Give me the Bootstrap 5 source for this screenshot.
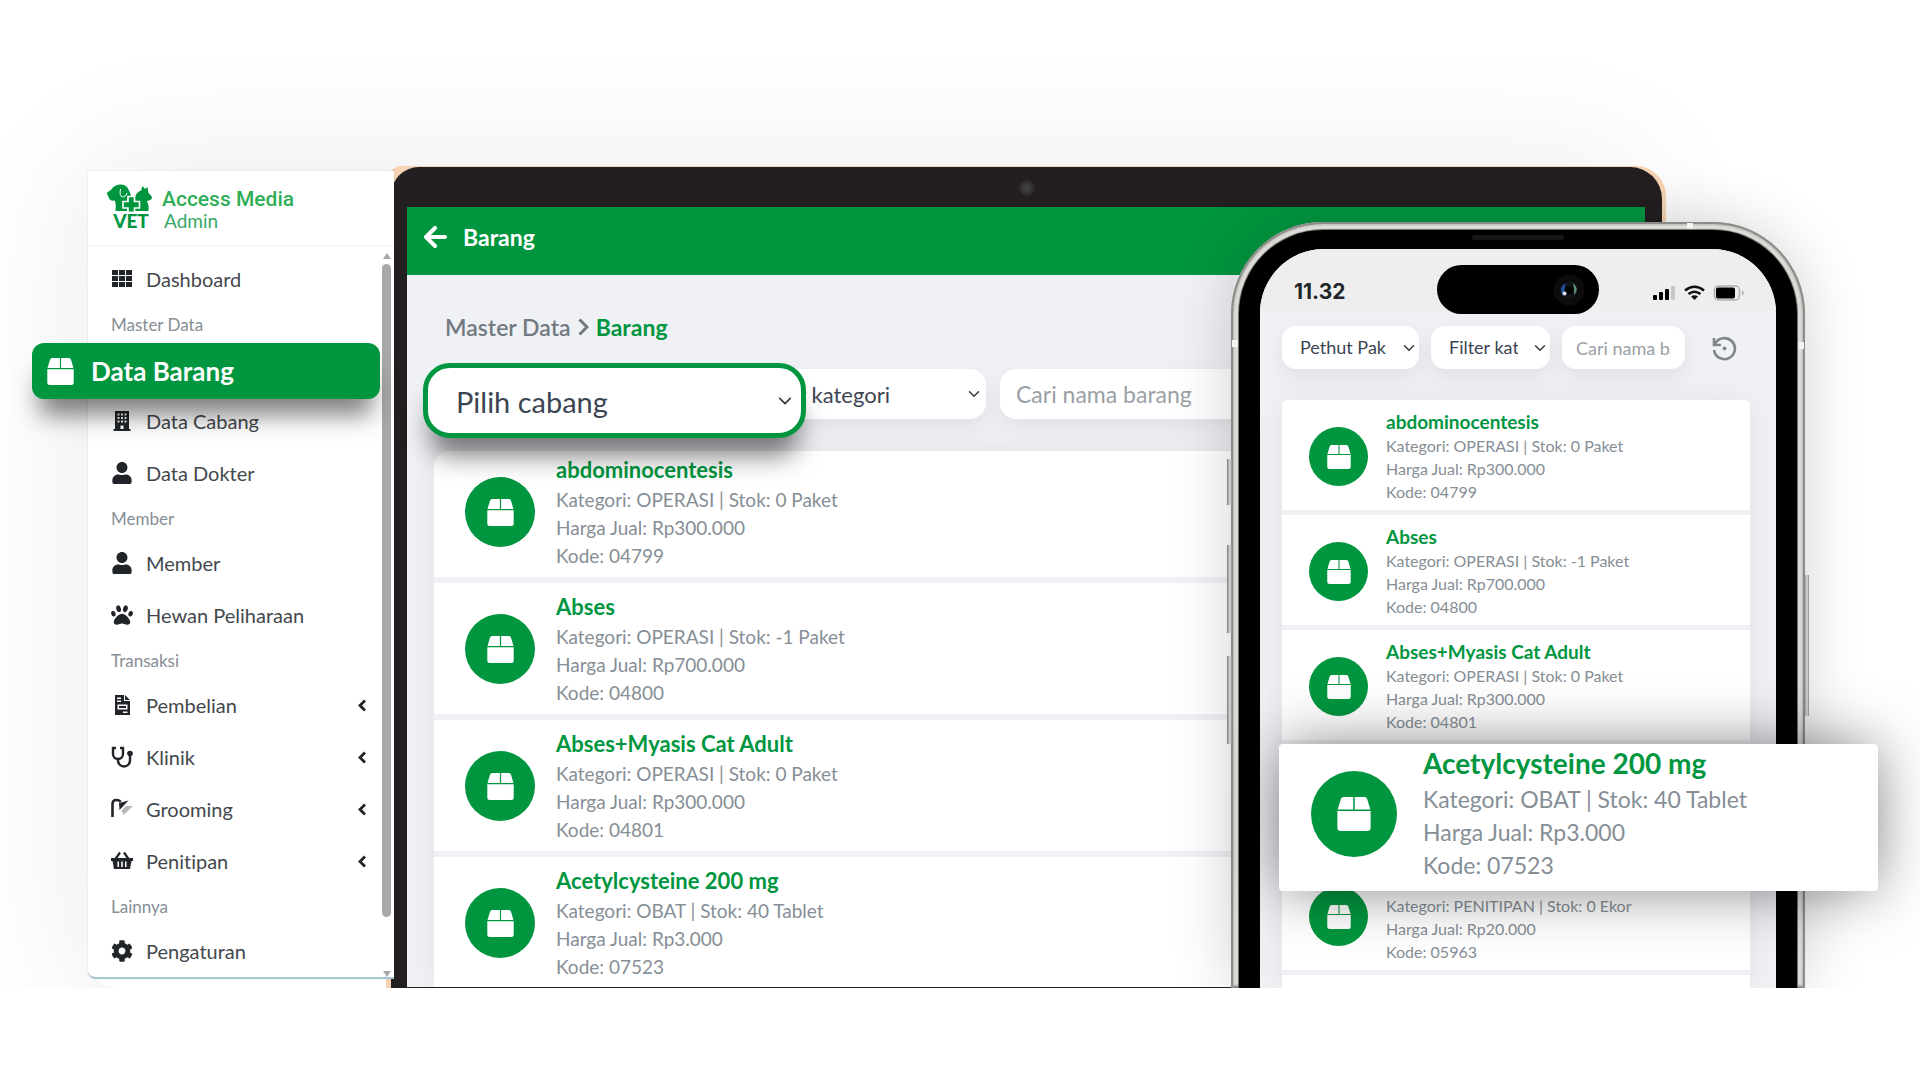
<!DOCTYPE html>
<html lang="id">
<head>
<meta charset="utf-8">
<meta name="viewport" content="width=device-width, initial-scale=1">
<title>Access Media Vet - Barang</title>
<link href="https://cdn.jsdelivr.net/npm/bootstrap@5.3.0/dist/css/bootstrap.min.css" rel="stylesheet">
<style>
  :root { --vet: #00963f; --ink: #212529; --soft: #868e96; --panel: #eff1f5; }
  body { font-family: Lato, "Open Sans", sans-serif; font-variant-ligatures: none; background: #fff; color: var(--ink); }
  a { text-decoration: none; color: inherit; }
  .scene { padding: 166px 254px 0 88px; overflow: hidden; }
  .scene::before { content: ""; position: absolute; left: 88px; right: 290px; top: 171px; bottom: 0; border-radius: 30px; box-shadow: 0 0 130px 16px rgba(0,0,0,.07); }

  /* Sidebar */
  .side { width: 306px; margin-top: 5px; background: #fff; z-index: 3; border-bottom: 2px solid #a9c6d6; border-bottom-left-radius: 8px; flex: none; box-shadow: 0 0 2px rgba(0,0,0,.12); }
  .brand { height: 75px; padding: 13px 0 0 19px; border-bottom: 1px solid #f3f4f5; }
  .brand-logo { width: 46px; height: 52px; overflow: visible; }
  .brand-text { padding-left: 9px; }
  .brand-name { font: 500 21px/24px Roboto, sans-serif; color: #2fae57; padding-top: 3px; }
  .brand-role { font-size: 19px; line-height: 20px; color: #38a866; padding-left: 2px; }
  .menu { padding-top: 7px; }
  .menu-link { height: 52px; padding: 0 27px 0 23px; gap: 13px; font-size: 20px; color: #44484c; }
  .menu-link svg { width: 22px; height: 22px; flex: none; fill: var(--ink); }
  .menu-link .chev { width: 10px; height: 13px; margin-left: auto; }
  .menu-label { height: 38px; line-height: 40px; padding-left: 23px; font-size: 17px; color: var(--soft); }
  .menu-link.current { height: 56px; margin: 0 14px -4px -56px; padding: 0 15px; gap: 17px; border-radius: 12px; background: var(--vet); color: #fff; font-size: 26px; font-weight: 700; box-shadow: 0 24px 24px -8px rgba(0,0,0,.5); z-index: 1; }
  .menu-link.current svg { width: 27px; height: 27px; fill: #fff; }
  .scroll-track { right: 3px; top: 82px; width: 9px; bottom: 0; }
  .scroll-thumb { width: 9px; flex: 1; margin: 5px 0 54px; border-radius: 5px; background: #a8a8a8; }
  .arrow-up { border: 4px solid transparent; border-top: 0; border-bottom: 6px solid #a8a8a8; }
  .arrow-down { border: 4px solid transparent; border-bottom: 0; border-top: 6px solid #a8a8a8; }

  /* Laptop */
  .laptop { margin-left: -8px; background: #f6d4b3; border-radius: 16px 30px 0 0; padding: 1px 4px 0 5px; }
  .lid { background: #231f20; border-radius: 28px 32px 0 0; padding: 40px 17px 1px 16px; }
  .lid-cam { left: 50%; top: 13px; width: 16px; height: 16px; border-radius: 50%; background: radial-gradient(#454547, #2d2a2c 65%, #231f20); }
  .app { background: var(--panel); }
  .app-bar { height: 68px; padding: 0 16px 8px; gap: 16px; background: var(--vet); color: #fff; font-size: 23px; font-weight: 700; }
  .app-bar svg { width: 24px; height: 22px; }
  .app-body { padding: 37px 27px 0; }
  .crumbs { padding-left: 11px; margin-bottom: 27px; font-size: 23px; line-height: 30px; font-weight: 600; color: #727980; gap: 7px; }
  .crumbs .here { color: var(--vet); font-weight: 700; }
  .filters { height: 50px; gap: 14px; margin-bottom: 32px; }
  .field { height: 50px; border: 0; border-radius: 16px; background-color: #fff; font-size: 22px; color: #3d4552; padding: 0 16px; box-shadow: 0 8px 22px rgba(0,0,0,.07); }
  input.field { font-size: 23px; }
  select.field { background-position: right 5px center; background-size: 14px 12px; padding: 0 22px 0 24px; }
  .field::placeholder { color: #9a9fa6; opacity: 1; }
  .slot-branch { flex: 0 0 284px; }
  .slot-cat { flex: 0 0 254px; }
  select.field-lift { left: -11px; top: -6px; width: 383px; height: 75px; border: 5px solid var(--vet); border-radius: 27px; padding: 2px 40px 0 28px; font-size: 29px; background-position: right 7px center; background-size: 18px 14px; box-shadow: 0 26px 26px -8px rgba(0,0,0,.5); z-index: 2; }

  /* Item lists */
  .items { --bs-list-group-bg: #fff; border-radius: 16px 16px 0 0; gap: 6px; background: var(--panel); box-shadow: 0 0 30px rgba(0,0,0,.06); }
  .item { padding: 8px 31px 7px; gap: 21px; border: 0; background: #fff; }
  .items .item:first-child { padding-top: 3px; border-radius: 16px 16px 0 0; }
  .items .item:last-child { padding-bottom: 6px; }
  .pic { width: 70px; height: 70px; border-radius: 50%; background: var(--vet); flex: none; }
  .pic svg { width: 27px; height: 27px; fill: #fff; }
  .item-name { font-size: 22px; line-height: 32px; font-weight: 700; color: var(--vet); margin: 0; }
  .item-line { font-size: 19px; line-height: 28px; color: var(--soft); margin: 0; white-space: nowrap; }

  /* Phone */
  .phone { right: 115px; top: 222px; bottom: 0; width: 574px; z-index: 5; padding: 8px 8px 0; border-radius: 92px 92px 0 0; background: #e2e1dc; box-shadow: inset 0 0 0 2px #8b8b89, inset 0 0 3px 3px #b5b4b0, 0 0 60px rgba(0,0,0,.18); }
  .bezel { background: #000; border-radius: 84px 84px 0 0; padding: 19px 21px 0; box-shadow: 0 0 1px 1px #6b6b69; }
  .earpiece { left: 50%; top: 5px; width: 92px; height: 5px; margin-left: -46px; border-radius: 3px; background: #161616; }
  .screen { background: var(--panel); border-radius: 64px 64px 0 0; overflow: hidden; }
  .status { height: 62px; padding: 31px 30px 0 34px; background: #eee; font: 700 21px/24px Inter, sans-serif; }
  .island { left: 177px; top: 16px; width: 162px; height: 49px; border-radius: 25px; background: #000; z-index: 1; padding-right: 14px; }
  .key { background: linear-gradient(90deg, #777, #ddd 60%, #888); width: 5px; }
  .key-a { left: -4px; top: 237px; height: 46px; }
  .key-b { left: -4px; top: 323px; height: 88px; }
  .key-c { left: -4px; top: 434px; height: 88px; }
  .key-d { right: -4px; top: 353px; height: 141px; }
  .band { width: 6px; height: 7px; background: #f4f4f0; }
  .band-l { left: 1px; top: 118px; } .band-r { right: 1px; top: 120px; } .band-t { right: 112px; top: 1px; height: 6px; }
  .phone-body { padding: 15px 26px 0 22px; }
  .phone .filters { height: 43px; gap: 12px; margin-bottom: 31px; }
  .phone .field { height: 43px; border-radius: 14px; font-size: 18px; padding: 0 14px; }
  .phone select.field { padding: 0 32px 0 18px; background-position: right 4px center; background-size: 12px 12px; }
  .f-a { flex: 0 0 137px; width: 137px; } .f-b { flex: 0 0 119px; width: 119px; } .f-c { flex: 0 0 123px; width: 123px; min-width: 0; }
  .reset { margin-left: 14px; border: 0; background: none; padding: 0; }
  .phone .items { border-radius: 6px 6px 0 0; gap: 5px; }
  .phone .items .item, .phone .items .item:first-child { padding: 10px 27px 7px; gap: 18px; border-radius: 0; }
  .phone .items .item:first-child { border-radius: 6px 6px 0 0; }
  .phone .items .pic { width: 59px; height: 59px; }
  .phone .items .pic svg { width: 24px; height: 24px; }
  .phone .items .item-name { font-size: 19px; line-height: 24px; }
  .phone .items .item-line { font-size: 16px; line-height: 23px; }
  .callout { left: 48px; top: 522px; width: 599px; height: 147px; padding: 1px 32px 9px; gap: 26px; border-radius: 4px; background: #fff; box-shadow: 0 0 60px -2px rgba(0,0,0,.5); z-index: 2; }
  .callout .pic { width: 86px; height: 86px; }
  .callout .pic svg { width: 34px; height: 34px; }
  .callout .item-name { font-size: 28px; line-height: 36px; margin-bottom: 2px; }
  .callout .item-line { font-size: 23px; line-height: 33px; }
</style>
</head>
<body>
<svg class="d-none" aria-hidden="true">
  <symbol id="box" viewBox="0 0 27 27"><path d="M5 0h7.900v10H0.500L3 1.800Q3.600 0 5 0zM14.100 0H22q1.400 0 2 1.800L26.500 10H14.100zM0.300 11.200h26.400V24.500q0 2.500-2.500 2.500H2.800Q0.300 27 0.300 24.500z"/></symbol>
  <symbol id="left" viewBox="0 0 10 13"><path d="M8 1.500 3 6.500l5 5" fill="none" stroke="#212529" stroke-width="2.800"/></symbol>
  <symbol id="user" viewBox="-32 0 512 512"><path d="M224 256c70.700 0 128-57.300 128-128S294.700 0 224 0 96 57.300 96 128s57.300 128 128 128zm89.600 32h-16.700c-22.200 10.200-46.900 16-72.900 16s-50.600-5.800-72.900-16h-16.700C60.200 288 0 348.200 0 422.400V464c0 26.500 21.500 48 48 48h352c26.500 0 48-21.500 48-48v-41.600c0-74.200-60.200-134.400-134.400-134.400z"/></symbol>
</svg>

<main class="scene position-relative d-flex align-items-start">
  <aside class="side position-relative">
    <header class="brand d-flex">
      <svg class="brand-logo" viewBox="0 0 46 52" role="img" aria-label="VET" fill="#00963f">
        <path d="M0 8.500 4 6Q7 .8 13 .5q6.500 0 8.500 5L24 11q-1 4-4 3.500V27H8.500Q9.500 21 8 16.500 2 17.500 1.500 12.500 0 11 0 8.500z"/>
        <path d="M28 13q1.500-5 6-6.500L35.500 2 38 5l2.500-2 .8 5.500L45 13q0 3.500-5 4 2.500 5 1.500 10H26z"/>
        <path d="M13.500 5q-1.500 7 2 8 4-.5 4.500-4" fill="none" stroke="#fff" stroke-width="1"/>
        <path d="M21 12.500h6.500v5h5V24h-5v5H21v-5h-5v-6.500h5z" stroke="#fff" stroke-width="1.600"/>
        <path d="M0 27.500h46v3H0z" fill="#fff"/>
        <text x="24" y="44" text-anchor="middle" font-family="Lato, sans-serif" font-weight="900" font-size="19">VET</text>
      </svg>
      <div class="brand-text">
        <div class="brand-name">Access Media</div>
        <div class="brand-role">Admin</div>
      </div>
    </header>
    <nav class="menu">
      <a href="#" class="menu-link d-flex align-items-center"><svg viewBox="0 0 22 22"><path d="M1 2h6v5H1zM8 2h6v5H8zM15 2h6v5h-6zM1 8h6v5H1zM8 8h6v5H8zM15 8h6v5h-6zM1 14h6v5H1zM8 14h6v5H8zM15 14h6v5h-6z"/></svg>Dashboard</a>
      <div class="menu-label">Master Data</div>
      <a href="#" class="menu-link current position-relative d-flex align-items-center"><svg><use href="#box"/></svg>Data Barang</a>
      <a href="#" class="menu-link d-flex align-items-center"><svg viewBox="0 0 22 22"><path fill-rule="evenodd" d="M4 1h14v18h1.500v2h-17v-2H4zM6.500 3.500v2h2v-2zM10 3.500v2h2v-2zM13.500 3.500v2h2v-2zM6.500 7v2h2V7zM10 7v2h2V7zM13.500 7v2h2V7zM6.500 10.500v2h2v-2zM10 10.500v2h2v-2zM13.500 10.500v2h2v-2zM9.500 15.500V19h3v-3.500z"/></svg>Data Cabang</a>
      <a href="#" class="menu-link d-flex align-items-center"><svg><use href="#user"/></svg>Data Dokter</a>
      <div class="menu-label">Member</div>
      <a href="#" class="menu-link d-flex align-items-center"><svg><use href="#user"/></svg>Member</a>
      <a href="#" class="menu-link d-flex align-items-center"><svg viewBox="0 0 512 512"><path d="M256 224c-79.400 0-192 122.800-192 200.300 0 34.900 26.800 55.700 71.700 55.700 48.900 0 81.100-25.100 120.300-25.100 39.500 0 71.800 25.100 120.300 25.100 44.900 0 71.700-20.800 71.700-55.700C448 346.800 335.400 224 256 224z"/><ellipse cx="55" cy="226" rx="50" ry="66" transform="rotate(-18 55 226)"/><ellipse cx="457" cy="226" rx="50" ry="66" transform="rotate(18 457 226)"/><ellipse cx="176" cy="110" rx="54" ry="80" transform="rotate(-14 176 110)"/><ellipse cx="336" cy="110" rx="54" ry="80" transform="rotate(14 336 110)"/></svg>Hewan Peliharaan</a>
      <div class="menu-label">Transaksi</div>
      <a href="#" class="menu-link d-flex align-items-center"><svg viewBox="0 0 22 22"><path fill-rule="evenodd" d="M4 1h9v6h6v14H4zM14 1l5 5h-5zM6 3.500v1.500h4V3.500zM6 6.500V8h4V6.500zM6.500 10.500v5h10v-5zM8 12h7v2H8zM12 17.500V19h4.500v-1.500z"/></svg>Pembelian<svg class="chev"><use href="#left"/></svg></a>
      <a href="#" class="menu-link d-flex align-items-center"><svg viewBox="0 0 22 22"><path d="M5 2H2v6a5 5 0 0 0 10 0V2H9M7 13v1.500a5.500 5.500 0 0 0 12 0V9" fill="none" stroke="#212529" stroke-width="2.400"/><circle cx="19" cy="7.500" r="2.800"/></svg>Klinik<svg class="chev"><use href="#left"/></svg></a>
      <a href="#" class="menu-link d-flex align-items-center"><svg viewBox="0 0 22 22"><path d="M1.500 19V6q0-4 4-4 3 0 4 2" fill="none" stroke="#212529" stroke-width="2.600"/><path d="M8 5 17.500 2.500 8.500 12z"/><path d="M15 8h7L12.500 17l-2-4.500z" fill="#b5b7b9"/></svg>Grooming<svg class="chev"><use href="#left"/></svg></a>
      <a href="#" class="menu-link d-flex align-items-center"><svg viewBox="0 0 22 22"><path d="M4.500 9 9 2.500M17.500 9 13 2.500" stroke="#212529" stroke-width="2.200"/><path fill-rule="evenodd" d="M0 8h22v3h-1.500L19 19H3L1.500 11H0zM6.500 11.500V17H8v-5.500zM10.200 11.500V17h1.600v-5.500zM14 11.500V17h1.500v-5.500z"/></svg>Penitipan<svg class="chev"><use href="#left"/></svg></a>
      <div class="menu-label">Lainnya</div>
      <a href="#" class="menu-link d-flex align-items-center"><svg viewBox="0 0 512 512"><path d="M487.400 315.700l-42.600-24.600c4.300-23.200 4.300-47 0-70.200l42.600-24.600c4.900-2.800 7.100-8.600 5.500-14-11.100-35.600-30-67.800-54.700-94.600-3.800-4.100-10-5.100-14.800-2.300L380.800 110c-17.900-15.400-38.500-27.300-60.800-35.100V25.800c0-5.600-3.900-10.500-9.400-11.700-36.700-8.200-74.300-7.800-109.200 0-5.500 1.200-9.400 6.100-9.400 11.700V75c-22.200 7.900-42.800 19.800-60.800 35.100L88.700 85.500c-4.900-2.800-11-1.900-14.800 2.300-24.700 26.700-43.600 58.900-54.700 94.600-1.700 5.400.6 11.200 5.500 14L67.300 221c-4.300 23.200-4.300 47 0 70.200l-42.600 24.600c-4.900 2.800-7.100 8.600-5.500 14 11.100 35.600 30 67.800 54.700 94.600 3.800 4.100 10 5.100 14.800 2.300l42.600-24.600c17.900 15.400 38.500 27.300 60.800 35.100v49.200c0 5.600 3.900 10.500 9.400 11.700 36.700 8.200 74.300 7.800 109.200 0 5.500-1.200 9.400-6.100 9.400-11.700v-49.200c22.200-7.900 42.800-19.800 60.800-35.100l42.600 24.600c4.900 2.800 11 1.900 14.800-2.300 24.700-26.700 43.600-58.900 54.700-94.600 1.500-5.500-.7-11.300-5.600-14.100zM256 336c-44.100 0-80-35.900-80-80s35.900-80 80-80 80 35.900 80 80-35.900 80-80 80z"/></svg>Pengaturan</a>
    </nav>
    <div class="scroll-track position-absolute d-flex flex-column align-items-center">
      <span class="arrow-up"></span><span class="scroll-thumb"></span><span class="arrow-down"></span>
    </div>
  </aside>

  <section class="laptop position-relative flex-grow-1">
    <div class="lid position-relative">
      <span class="lid-cam position-absolute translate-middle-x"></span>
      <div class="app">
        <header class="app-bar d-flex align-items-center">
          <svg viewBox="0 0 24 22" fill="none" stroke="#fff" stroke-width="4" stroke-linecap="round" stroke-linejoin="round"><path d="M12 2 3 11l9 9M3 11h19"/></svg>
          <span>Barang</span>
        </header>
        <div class="app-body">
          <nav class="crumbs d-flex align-items-center">
            <a href="#">Master Data</a>
            <svg width="11" height="18" viewBox="0 0 11 18" fill="none" stroke="#727980" stroke-width="3"><path d="M1.500 1.500 9 9l-7.500 7.500"/></svg>
            <span class="here">Barang</span>
          </nav>
          <form class="filters d-flex">
            <div class="slot-branch position-relative">
              <select class="form-select field field-lift position-absolute" aria-label="Cabang"><option>Pilih cabang</option></select>
            </div>
            <div class="slot-cat">
              <select class="form-select field" aria-label="Kategori"><option>Filter kategori</option></select>
            </div>
            <input class="form-control field flex-grow-1" type="text" placeholder="Cari nama barang" aria-label="Cari nama barang">
          </form>
          <ul class="items list-group">
            <li class="item list-group-item d-flex align-items-center">
              <span class="pic d-flex align-items-center justify-content-center"><svg><use href="#box"/></svg></span>
              <div><h2 class="item-name">abdominocentesis</h2><p class="item-line">Kategori: OPERASI | Stok: 0 Paket</p><p class="item-line">Harga Jual: Rp300.000</p><p class="item-line">Kode: 04799</p></div>
            </li>
            <li class="item list-group-item d-flex align-items-center">
              <span class="pic d-flex align-items-center justify-content-center"><svg><use href="#box"/></svg></span>
              <div><h2 class="item-name">Abses</h2><p class="item-line">Kategori: OPERASI | Stok: -1 Paket</p><p class="item-line">Harga Jual: Rp700.000</p><p class="item-line">Kode: 04800</p></div>
            </li>
            <li class="item list-group-item d-flex align-items-center">
              <span class="pic d-flex align-items-center justify-content-center"><svg><use href="#box"/></svg></span>
              <div><h2 class="item-name">Abses+Myasis Cat Adult</h2><p class="item-line">Kategori: OPERASI | Stok: 0 Paket</p><p class="item-line">Harga Jual: Rp300.000</p><p class="item-line">Kode: 04801</p></div>
            </li>
            <li class="item list-group-item d-flex align-items-center">
              <span class="pic d-flex align-items-center justify-content-center"><svg><use href="#box"/></svg></span>
              <div><h2 class="item-name">Acetylcysteine 200 mg</h2><p class="item-line">Kategori: OBAT | Stok: 40 Tablet</p><p class="item-line">Harga Jual: Rp3.000</p><p class="item-line">Kode: 07523</p></div>
            </li>
          </ul>
        </div>
      </div>
    </div>
  </section>

  <section class="phone position-absolute">
    <span class="key key-a position-absolute"></span><span class="key key-b position-absolute"></span><span class="key key-c position-absolute"></span><span class="key key-d position-absolute"></span>
    <span class="band band-l position-absolute"></span><span class="band band-r position-absolute"></span><span class="band band-t position-absolute"></span>
    <div class="bezel position-relative h-100">
      <span class="earpiece position-absolute"></span>
      <div class="screen position-relative h-100">
        <div class="island position-absolute d-flex align-items-center justify-content-end">
          <svg width="32" height="32" viewBox="0 0 32 32"><circle cx="16" cy="16" r="15.500" fill="#0c0c0d"/><circle cx="16" cy="16" r="9" fill="#101418"/><path d="M10 11q-4 5 0 10l3 0q-3-5 0-11z" fill="#1f4f9a"/><path d="M20 9q7 6 1 12 1-6-1-12z" fill="#5c9a7c"/><circle cx="16" cy="16" r="4" fill="#000"/><circle cx="11.500" cy="19.500" r="2" fill="#dfe3fb"/></svg>
        </div>
        <div class="status d-flex align-items-start">
          <span>11.32</span>
          <svg class="ms-auto mt-1" width="94" height="20" viewBox="0 0 94 20">
            <rect x="1" y="11" width="4" height="5" rx="1"/><rect x="7" y="8" width="4" height="8" rx="1"/><rect x="13" y="5" width="4" height="11" rx="1"/><rect x="19" y="2" width="4" height="14" rx="1" fill="#c9c5cb"/>
            <g fill="none" stroke="#111" stroke-width="2.600"><path d="M33 6.500q9.500-7.500 19 0M36.500 10q6-4.500 12 0"/></g><path d="M39 12.500q3.500-2.500 7 0L42.500 16z" fill="#111"/>
            <rect x="62.500" y="2" width="25" height="14" rx="4" fill="none" stroke="#aeaeb2" stroke-width="1.500"/><rect x="64" y="3.500" width="19" height="11" rx="2"/><path d="M90 6q3.500 3 0 6z" fill="#aeaeb2"/>
          </svg>
        </div>
        <div class="phone-body">
          <form class="filters d-flex align-items-center">
            <select class="form-select field f-a" aria-label="Cabang"><option>Pethut Paku</option></select>
            <select class="form-select field f-b" aria-label="Kategori"><option>Filter kategori</option></select>
            <input class="form-control field f-c" type="text" placeholder="Cari nama barang" aria-label="Cari nama barang">
            <button class="reset d-flex" type="button" aria-label="Atur ulang"><svg width="26" height="26" viewBox="0 0 26 26" fill="none" stroke="#7f868d" stroke-width="2.600"><path d="M4 9a10.500 10.500 0 1 1-1 6M3 3v7h7"/><circle cx="13.500" cy="13.500" r="2" fill="#7f868d" stroke="none"/></svg></button>
          </form>
          <ul class="items list-group">
            <li class="item list-group-item d-flex align-items-center">
              <span class="pic d-flex align-items-center justify-content-center"><svg><use href="#box"/></svg></span>
              <div><h2 class="item-name">abdominocentesis</h2><p class="item-line">Kategori: OPERASI | Stok: 0 Paket</p><p class="item-line">Harga Jual: Rp300.000</p><p class="item-line">Kode: 04799</p></div>
            </li>
            <li class="item list-group-item d-flex align-items-center">
              <span class="pic d-flex align-items-center justify-content-center"><svg><use href="#box"/></svg></span>
              <div><h2 class="item-name">Abses</h2><p class="item-line">Kategori: OPERASI | Stok: -1 Paket</p><p class="item-line">Harga Jual: Rp700.000</p><p class="item-line">Kode: 04800</p></div>
            </li>
            <li class="item list-group-item d-flex align-items-center">
              <span class="pic d-flex align-items-center justify-content-center"><svg><use href="#box"/></svg></span>
              <div><h2 class="item-name">Abses+Myasis Cat Adult</h2><p class="item-line">Kategori: OPERASI | Stok: 0 Paket</p><p class="item-line">Harga Jual: Rp300.000</p><p class="item-line">Kode: 04801</p></div>
            </li>
            <li class="item list-group-item d-flex align-items-center">
              <span class="pic"></span>
              <div><h2 class="item-name">&nbsp;</h2><p class="item-line">&nbsp;</p><p class="item-line">&nbsp;</p><p class="item-line">&nbsp;</p></div>
            </li>
            <li class="item list-group-item d-flex align-items-center">
              <span class="pic d-flex align-items-center justify-content-center"><svg><use href="#box"/></svg></span>
              <div><h2 class="item-name">&nbsp;</h2><p class="item-line">Kategori: PENITIPAN | Stok: 0 Ekor</p><p class="item-line">Harga Jual: Rp20.000</p><p class="item-line">Kode: 05963</p></div>
            </li>
            <li class="item list-group-item"></li>
          </ul>
        </div>
      </div>
    </div>
    <article class="callout position-absolute d-flex align-items-center">
      <span class="pic d-flex align-items-center justify-content-center"><svg><use href="#box"/></svg></span>
      <div><h2 class="item-name">Acetylcysteine 200 mg</h2><p class="item-line">Kategori: OBAT | Stok: 40 Tablet</p><p class="item-line">Harga Jual: Rp3.000</p><p class="item-line">Kode: 07523</p></div>
    </article>
  </section>
</main>
<script src="https://cdn.jsdelivr.net/npm/bootstrap@5.3.0/dist/js/bootstrap.bundle.min.js"></script>
</body>
</html>
